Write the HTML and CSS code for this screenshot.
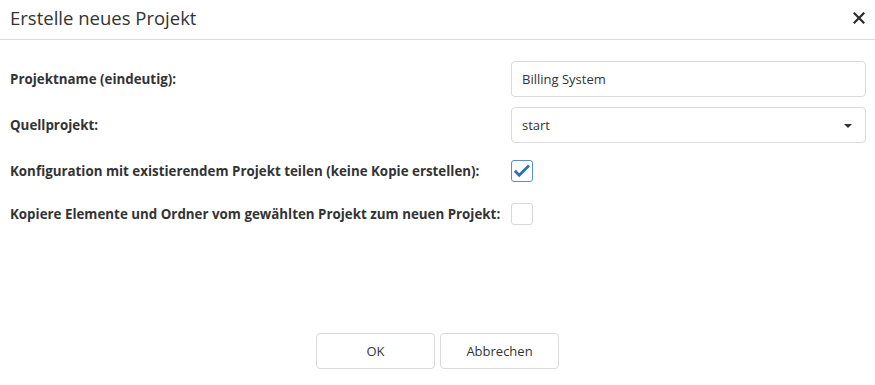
FILE: index.html
```html
<!DOCTYPE html>
<html lang="de">
<head>
<meta charset="utf-8">
<title>Erstelle neues Projekt</title>
<link rel="stylesheet" href="styles.css">
</head>
<body>
<div class="dialog">
  <header class="dlg-header">
    <h1 class="dlg-title">Erstelle neues Projekt</h1>
    <button class="dlg-close" aria-label="Schließen">
      <svg width="12" height="12" viewBox="0 0 12 12"><path d="M1.5 1.5 L10.5 10.5 M10.5 1.5 L1.5 10.5" stroke="#2b2b2b" stroke-width="2.2" stroke-linecap="square"/></svg>
    </button>
  </header>
  <div class="dlg-body">
    <div class="form">
      <label class="lbl">Projektname (eindeutig):</label>
      <div class="ctl"><div class="input">Billing System</div></div>
      <label class="lbl">Quellprojekt:</label>
      <div class="ctl"><div class="input select">start<span class="caret"></span></div></div>
      <label class="lbl">Konfiguration mit existierendem Projekt teilen (keine Kopie erstellen):</label>
      <div class="ctl"><span class="cb checked"><svg width="18" height="14" viewBox="0 0 18 14"><path d="M1.8 6.8 L6.2 11.2 L16 1.6" fill="none" stroke="#2f6fb8" stroke-width="2.8"/></svg></span></div>
      <label class="lbl">Kopiere Elemente und Ordner vom gewählten Projekt zum neuen Projekt:</label>
      <div class="ctl"><span class="cb"></span></div>
    </div>
  </div>
  <footer class="dlg-footer">
    <button class="btn">OK</button>
    <button class="btn">Abbrechen</button>
  </footer>
</div>
</body>
</html>
```
FILE: styles.css
```css
html, body {
  margin: 0;
  padding: 0;
  background: #fff;
}
body {
  font-family: "Open Sans", "Noto Sans", sans-serif;
  color: #333;
}
.dialog {
  width: 875px;
  height: 385px;
  display: flex;
  flex-direction: column;
}
.dlg-header {
  height: 40px;
  border-bottom: 1px solid #dcdcdc;
  display: flex;
  align-items: center;
  justify-content: space-between;
  padding: 0 10px 0 10px;
  box-sizing: border-box;
}
.dlg-title {
  margin: 0;
  font-size: 18.5px;
  font-weight: 400;
  color: #333;
  position: relative;
  top: -2px;
}
.dlg-close {
  background: none;
  border: none;
  padding: 0;
  width: 12px;
  height: 12px;
  display: flex;
  align-items: center;
  justify-content: center;
  position: relative;
  top: -2px;
}
.dlg-body {
  flex: 1;
  padding: 16px 9px 0 10px;
}
.form {
  display: grid;
  grid-template-columns: 501px 1fr;
  grid-template-rows: 46px 46px 46px 40px;
  align-items: center;
}
.lbl {
  font-size: 13.35px;
  font-weight: 700;
  color: #333;
}
.ctl {
  display: flex;
  align-items: center;
}
.input {
  flex: 1;
  height: 36px;
  box-sizing: border-box;
  border: 1px solid #dadada;
  border-radius: 4px;
  padding: 0 10px;
  display: flex;
  align-items: center;
  font-size: 13px;
  color: #333;
}
.select {
  position: relative;
}
.caret {
  position: absolute;
  right: 13px;
  top: 16px;
  width: 0;
  height: 0;
  border-left: 4px solid transparent;
  border-right: 4px solid transparent;
  border-top: 4px solid #333;
}
.cb {
  width: 22px;
  height: 22px;
  box-sizing: border-box;
  border: 1px solid #d8d8d8;
  border-radius: 3px;
  display: flex;
  align-items: center;
  justify-content: center;
}
.cb.checked {
  border-color: #5a8fcc;
}
.dlg-footer {
  display: flex;
  justify-content: center;
  gap: 5px;
  padding: 0 0 16px 0;
}
.btn {
  width: 119px;
  height: 36px;
  background: #fff;
  border: 1px solid #dadada;
  border-radius: 4px;
  font-family: "Open Sans", "Noto Sans", sans-serif;
  font-size: 13px;
  color: #333;
}
```
